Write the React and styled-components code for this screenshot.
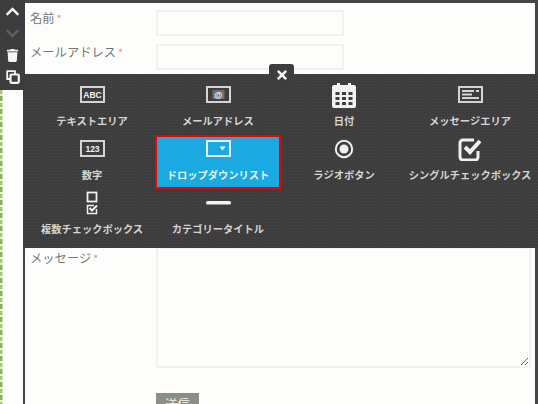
import React from "react";
import styled, { createGlobalStyle } from "styled-components";
import { FaChevronUp, FaChevronDown, FaTrash, FaTimes } from "react-icons/fa";

const GlobalStyle = createGlobalStyle`
  html, body {
    margin: 0;
    background: #fdfdfb;
    font-family: "Noto Sans CJK JP", "Liberation Sans", sans-serif;
  }
`;

const Page = styled.div`
  display: flex;
  width: 538px;
  height: 404px;
  overflow: hidden;
  background: #fdfdfb;
`;

const Gutter = styled.aside`
  display: flex;
  flex-direction: column;
  flex: 0 0 23px;
  min-width: 0;
`;

const Toolbar = styled.div`
  display: flex;
  flex-direction: column;
  align-items: center;
  flex: 0 0 90px;
  width: 25px;
  background: #3d3d3d;
  position: relative;
  z-index: 2;
`;

const ToolButton = styled.button`
  display: flex;
  align-items: center;
  justify-content: center;
  width: 25px;
  height: 22px;
  padding: 0;
  border: 0;
  background: none;
  font-size: ${(p) => p.$size || 13}px;
  color: ${(p) => (p.$disabled ? "#5f5f5f" : "#f4f4f4")};
`;

const GreenEdge = styled.div`
  flex: 1;
  background:
    repeating-linear-gradient(180deg, #a5c878 0 4px, #eef2cc 4px 6px, #86b45a 6px 11px, #f2f2d6 11px 13px)
    left top / 2.500px 100% no-repeat,
    #fdfdfb;
`;

const Frame = styled.main`
  position: relative;
  flex: 1;
  border: solid #454545;
  border-width: 3px 3px 0 2px;
`;

const Form = styled.form`
  display: flex;
  flex-direction: column;
  gap: 8px;
  padding: 7px 0 0 5px;
`;

const Row = styled.div`
  display: grid;
  grid-template-columns: 126px 1fr;
  align-items: start;
  margin-top: ${(p) => p.$gap || 0}px;
`;

// fields that sit behind the open picker, only their height matters here
const CoveredFields = styled.div`
  height: 161px;
`;

const Label = styled.label`
  font-size: 12.3px;
  line-height: 18px;
  margin-top: ${(p) => p.$top ?? -1}px;
  color: #777;
`;

const Required = styled.span`
  color: #f58a8a;
  font-size: 11px;
  margin-left: 2px;
`;

const TextInput = styled.input`
  width: 188px;
  height: 26px;
  box-sizing: border-box;
  border: 2px solid #f2f2f0;
  background: #fdfdfb;
`;

const MessageBox = styled.textarea`
  display: block;
  width: 375px;
  height: 121px;
  box-sizing: border-box;
  border: 2px solid #f2f2f0;
  background: #fdfdfb;
  resize: both;
`;

const Submit = styled.button`
  grid-column: 2;
  justify-self: start;
  width: 43px;
  height: 22px;
  padding: 0;
  border: 0;
  background: #8c8f85;
  color: #f4f4f0;
  font-family: inherit;
  font-size: 12.3px;
`;

const Picker = styled.section`
  position: absolute;
  top: 71px;
  left: -2px;
  right: -3px;
  height: 174px;
  padding: 6.5px 5px 0 6px;
  box-sizing: border-box;
  background-color: #3d3d3d;
  background-image: radial-gradient(rgba(255, 255, 255, 0.05) 0.6px, transparent 0.7px);
  background-size: 3px 3px;
`;

const CloseTab = styled.button`
  position: absolute;
  top: -10px;
  left: 246px;
  display: flex;
  align-items: center;
  justify-content: center;
  width: 25px;
  height: 21px;
  padding: 0;
  border: 0;
  border-radius: 3px 3px 0 0;
  background: #3d3d3d;
  color: #f2f2f2;
  font-size: 14px;
`;

const PickerGrid = styled.div`
  display: grid;
  grid-template-columns: repeat(4, 126px);
  grid-auto-rows: 54px;
`;

const PickerItem = styled.div`
  position: relative;
  display: flex;
  flex-direction: column;
  align-items: center;
  justify-content: flex-start;
  box-sizing: border-box;
  background: ${(p) => (p.$selected ? "#1aa9e0" : "transparent")};
  outline: ${(p) => (p.$selected ? "2.5px solid #f00000" : "none")};
  outline-offset: -2.5px;
  color: ${(p) => (p.$selected ? "#e6f4fb" : "#d4d4d4")};
`;

const IconSlot = styled.div`
  display: flex;
  align-items: center;
  justify-content: center;
  height: 28px;
`;

const ItemLabel = styled.span`
  margin-top: 5px;
  font-size: 10.25px;
  font-weight: 700;
  line-height: 14px;
  white-space: nowrap;
`;

const IconText = styled.text`
  font-family: "Liberation Sans", sans-serif;
  font-weight: 700;
  fill: #f4f4f4;
  text-anchor: middle;
`;

const CopyIcon = () => (
  <svg width="14" height="14" viewBox="0 0 14 14">
    <path d="M9 4V1.200H1.200V9H4" fill="none" stroke="#f4f4f4" strokeWidth="1.800" />
    <rect x="4.500" y="4.500" width="8.300" height="8.300" rx="1" fill="none" stroke="#f4f4f4" strokeWidth="2.200" />
  </svg>
);

const FrameIcon = ({ children }) => (
  <svg width="25" height="17" viewBox="0 0 25 17">
    <rect x="1" y="1" width="23" height="15" fill="none" stroke="currentColor" strokeWidth="2" />
    {children}
  </svg>
);

const TextAreaIcon = () => (
  <FrameIcon>
    <IconText x="12.5" y="11.6" fontSize="8.5">ABC</IconText>
  </FrameIcon>
);

const MailIcon = () => (
  <FrameIcon>
    <rect x="6.500" y="4" width="12" height="9" fill="#6e6e6e" />
    <IconText x="12.5" y="11.5" fontSize="8.5">@</IconText>
  </FrameIcon>
);

const NumberIcon = () => (
  <FrameIcon>
    <IconText x="12.5" y="11.6" fontSize="8.5">123</IconText>
  </FrameIcon>
);

const MessageIcon = () => (
  <FrameIcon>
    <path d="M4 5h12M18 5h3M4 8.5h10M4 12h17" stroke="currentColor" strokeWidth="1.8" fill="none" />
  </FrameIcon>
);

const DropdownIcon = () => (
  <FrameIcon>
    <path d="M13.5 6.5h6l-3 4z" fill="#fff" />
  </FrameIcon>
);

const CalendarIcon = () => (
  <svg width="24" height="26" viewBox="0 0 24 26">
    <path
      fill="#f2f2f2"
      fillRule="evenodd"
      d="M2 3h3V1h3v2h8V1h3v2h3a2 2 0 0 1 2 2v19a2 2 0 0 1-2 2H2a2 2 0 0 1-2-2V5a2 2 0 0 1 2-2zM3.500 10v3h4v-3zm6.500 0v3h4v-3zm6.500 0v3h4v-3zM3.500 15v3h4v-3zm6.500 0v3h4v-3zm6.500 0v3h4v-3zM3.500 20v3h4v-3zm6.500 0v3h4v-3zm6.500 0v3h4v-3z"
    />
  </svg>
);

const RadioIcon = () => (
  <svg width="20" height="20" viewBox="0 0 20 20">
    <circle cx="10" cy="10" r="8.200" fill="none" stroke="#f0f0f0" strokeWidth="2" />
    <circle cx="10" cy="10" r="4.500" fill="#f0f0f0" />
  </svg>
);

const SingleCheckIcon = () => (
  <svg width="24" height="24" viewBox="0 0 24 24">
    <path
      d="M16 3H5a3 3 0 0 0-3 3v14a3 3 0 0 0 3 3h12a3 3 0 0 0 3-3v-6"
      fill="none"
      stroke="#f0f0f0"
      strokeWidth="3"
    />
    <path d="M7 10l5 5L22 4" fill="none" stroke="#f0f0f0" strokeWidth="4" />
  </svg>
);

const MultiCheckIcon = () => (
  <svg width="12" height="24" viewBox="0 0 12 24">
    <rect x="1.500" y="1.500" width="9" height="9" fill="none" stroke="#f0f0f0" strokeWidth="1.800" />
    <path d="M8 14.500H1.500v8h9V18" fill="none" stroke="#f0f0f0" strokeWidth="1.500" />
    <path d="M3.500 17l2.500 2.500 5-5" fill="none" stroke="#f0f0f0" strokeWidth="2" />
  </svg>
);

const TitleIcon = () => (
  <svg width="25" height="4" viewBox="0 0 25 4">
    <rect width="25" height="3.500" rx="1.500" fill="#f4f4f4" />
  </svg>
);

const items = [
  { label: "テキストエリア", icon: <TextAreaIcon /> },
  { label: "メールアドレス", icon: <MailIcon /> },
  { label: "日付", icon: <CalendarIcon /> },
  { label: "メッセージエリア", icon: <MessageIcon /> },
  { label: "数字", icon: <NumberIcon /> },
  { label: "ドロップダウンリスト", icon: <DropdownIcon />, selected: true },
  { label: "ラジオボタン", icon: <RadioIcon /> },
  { label: "シングルチェックボックス", icon: <SingleCheckIcon /> },
  { label: "複数チェックボックス", icon: <MultiCheckIcon /> },
  { label: "カテゴリータイトル", icon: <TitleIcon /> }
];

const App = () => (
  <Page>
    <GlobalStyle />
    <Gutter>
      <Toolbar>
        <ToolButton $size={15}><FaChevronUp /></ToolButton>
        <ToolButton $size={15} $disabled><FaChevronDown /></ToolButton>
        <ToolButton $size={13}><FaTrash /></ToolButton>
        <ToolButton><CopyIcon /></ToolButton>
      </Toolbar>
      <GreenEdge />
    </Gutter>
    <Frame>
      <Form>
        <Row>
          <Label>名前<Required>*</Required></Label>
          <TextInput />
        </Row>
        <Row>
          <Label>メールアドレス<Required>*</Required></Label>
          <TextInput />
        </Row>
        <CoveredFields />
        <Row>
          <Label $top={2}>メッセージ<Required>*</Required></Label>
          <MessageBox />
        </Row>
        <Row $gap={17}>
          <Submit type="button">送信</Submit>
        </Row>
      </Form>
      <Picker>
        <CloseTab type="button"><FaTimes /></CloseTab>
        <PickerGrid>
          {items.map((item) => (
            <PickerItem key={item.label} $selected={item.selected}>
              <IconSlot>{item.icon}</IconSlot>
              <ItemLabel>{item.label}</ItemLabel>
            </PickerItem>
          ))}
        </PickerGrid>
      </Picker>
    </Frame>
  </Page>
);

export default App;
